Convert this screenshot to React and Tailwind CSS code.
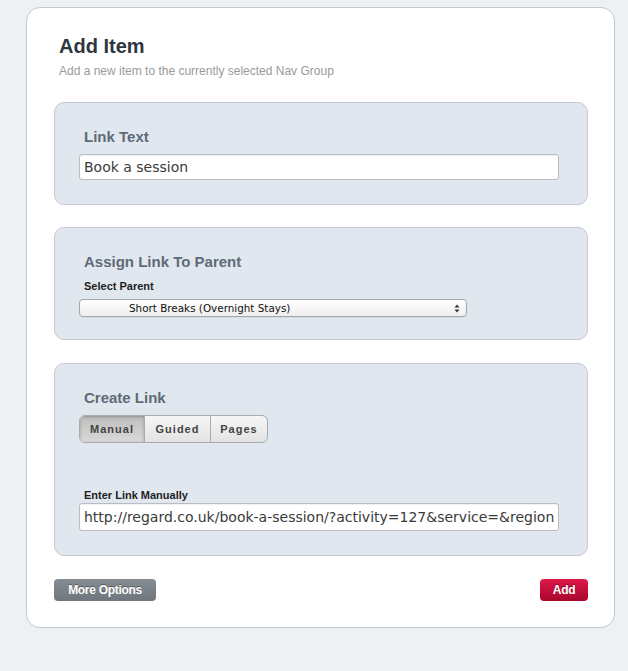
import React from "react";

const Panel = ({ title, className = "", children }) => (
  <div className={`rounded-[10px] border border-[#c5cad0] bg-[#e1e7ee] px-[24px] pt-[25px] ${className}`}>
    <h3 className="ml-[5px] text-[15px] leading-[18px] font-bold text-[#5e6b78]">{title}</h3>
    {children}
  </div>
);

const Label = ({ children, className = "" }) => (
  <div className={`ml-[5px] text-[11px] leading-[13px] font-bold text-[#1e1e1e] ${className}`}>{children}</div>
);

export default function App() {
  return (
    <div className="min-h-[671px] bg-[#edf1f4] pt-[7px] pl-[26px] font-['Liberation_Sans',Arial,sans-serif]">
      <div className="w-[589px] rounded-[14px] border border-[#c4c7ca] bg-white pl-[27px] pr-[26px] pt-[26px] pb-[26px]">
        <h1 className="ml-[5px] text-[20px] leading-[24px] font-bold text-[#2f3640]">Add Item</h1>
        <p className="ml-[5px] mt-[5px] text-[12px] leading-[16px] text-[#9a9a9a]">Add a new item to the currently selected Nav Group</p>

        <Panel title="Link Text" className="mt-[23px] pb-[24px]">
          <div className="mt-[8px] h-[26px] w-[480px] rounded-[3px] border border-[#b9bdc1] bg-white pl-[4px] font-['DejaVu_Sans',sans-serif] text-[14px] leading-[24px] text-[#3a3a3a] shadow-[inset_0_1px_1px_rgba(0,0,0,0.06)]">
            Book a session
          </div>
        </Panel>

        <Panel title="Assign Link To Parent" className="mt-[22px] pb-[22px]">
          <Label className="mt-[9px]">Select Parent</Label>
          <div className="mt-[6px] flex h-[18px] w-[388px] items-center justify-between rounded-[4px] border border-[#a5a8ab] bg-gradient-to-b from-white to-[#efefef] pl-[49px] pr-[6px] shadow-[0_1px_0_rgba(0,0,0,0.05)]">
            <span className="font-['DejaVu_Sans',sans-serif] text-[10.4px] leading-[16px] text-[#111]">Short Breaks (Overnight Stays)</span>
            <svg width="6" height="9" viewBox="0 0 6 9" className="text-[#333]">
              <path d="M3 0.5 L5.5 3.5 H0.5 Z M3 8.5 L5.5 5.5 H0.5 Z" fill="currentColor" />
            </svg>
          </div>
        </Panel>

        <Panel title="Create Link" className="mt-[23px] pb-[24px]">
          <div className="mt-[8px] flex h-[28px] w-[189px] overflow-hidden rounded-[6px] border border-[#a9abad] bg-gradient-to-b from-[#f6f6f6] to-[#e3e3e3] text-[11px] font-bold tracking-[1px] text-[#444]">
            <div className="flex w-[64px] items-center justify-center bg-gradient-to-b from-[#bdbdbd] to-[#d9d9d9] shadow-[inset_0_1px_3px_rgba(0,0,0,0.25)]">Manual</div>
            <div className="flex w-[66px] items-center justify-center border-l border-[#a9abad]">Guided</div>
            <div className="flex flex-1 items-center justify-center border-l border-[#a9abad]">Pages</div>
          </div>
          <Label className="mt-[46px]">Enter Link Manually</Label>
          <div className="mt-[1px] h-[28px] w-[480px] overflow-hidden whitespace-nowrap rounded-[3px] border border-[#b9bdc1] bg-white pl-[4px] font-['DejaVu_Sans',sans-serif] text-[14px] leading-[26px] text-[#3a3a3a] shadow-[inset_0_1px_1px_rgba(0,0,0,0.06)]">
            http://regard.co.uk/book-a-session/?activity=127&amp;service=&amp;region
          </div>
        </Panel>

        <div className="mt-[23px] flex items-center justify-between">
          <button className="h-[22px] w-[102px] rounded-[4px] bg-gradient-to-b from-[#858d93] to-[#6f777d] text-[12px] font-bold tracking-[-0.3px] text-white [text-shadow:0_-1px_0_rgba(0,0,0,0.35)]">More Options</button>
          <button className="h-[22px] w-[48px] rounded-[4px] bg-gradient-to-b from-[#e0174a] to-[#a8082d] text-[12px] font-bold tracking-[-0.3px] text-white [text-shadow:0_-1px_0_rgba(0,0,0,0.35)]">Add</button>
        </div>
      </div>
    </div>
  );
}
